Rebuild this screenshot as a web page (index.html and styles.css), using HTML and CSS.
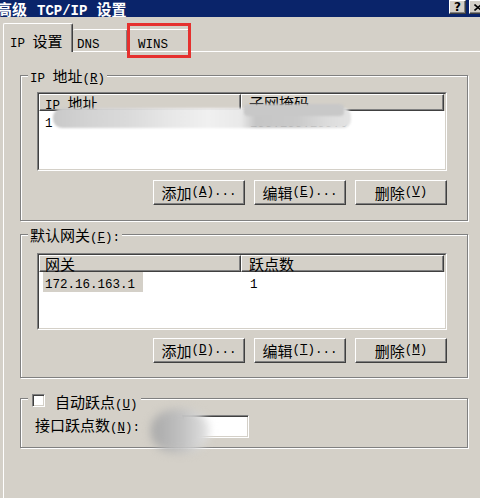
FILE: index.html
```html
<!DOCTYPE html>
<html lang="zh-CN">
<head>
<meta charset="utf-8">
<title>高级 TCP/IP 设置</title>
<link rel="stylesheet" href="styles.css">
</head>
<body>
<div class="titlebar">
  <span class="title">高级<span class="a tcp">TCP/IP</span>设置</span>
  <div class="tbtns">
    <span class="tbtn">?</span>
    <span class="tbtn"><svg width="8" height="7" viewBox="0 0 8 7"><path d="M0.5 0.5 L7.5 6.5 M7.5 0.5 L0.5 6.5" stroke="#000" stroke-width="1.6"/></svg></span>
  </div>
</div>
<div class="tabs">
  <div class="tab sel"><span class="a">IP </span>设置</div>
  <div class="tab dns"><span class="a">DNS</span></div>
  <div class="tab wins"><span class="a">WINS</span><span class="redbox"></span></div>
</div>
<div class="page">
  <div class="group g1">
    <div class="legend"><span class="a">IP </span>地址<span class="a">(<u>R</u>)</span></div>
    <div class="list l1">
      <div class="lin">
        <div class="lhead">
          <div class="hc c1"><span class="a">IP </span>地址</div>
          <div class="hc c2">子网掩码</div>
          <div class="hc c3"></div>
        </div>
        <div class="row">
          <div class="cell c1"><span class="a">1</span></div>
          <div class="cell c2"><span class="a">255.255.255.0</span></div>
        </div>
      </div>
      <div class="smear"></div>
      <div class="smear smear2"></div>
    </div>
    <div class="btns">
      <div class="btn">添加<span class="a">(<u>A</u>)...</span></div>
      <div class="btn">编辑<span class="a">(<u>E</u>)...</span></div>
      <div class="btn">删除<span class="a">(<u>V</u>)</span></div>
    </div>
  </div>

  <div class="group g2">
    <div class="legend">默认网关<span class="a">(<u>F</u>):</span></div>
    <div class="list l2">
      <div class="lin">
        <div class="lhead">
          <div class="hc c1">网关</div>
          <div class="hc c2">跃点数</div>
          <div class="hc c3"></div>
        </div>
        <div class="row">
          <div class="cell c1 selcell"><span class="hl"><span class="a">172.16.163.1</span></span></div>
          <div class="cell c2"><span class="a">1</span></div>
        </div>
      </div>
    </div>
    <div class="btns">
      <div class="btn">添加<span class="a">(<u>D</u>)...</span></div>
      <div class="btn">编辑<span class="a">(<u>T</u>)...</span></div>
      <div class="btn">删除<span class="a">(<u>M</u>)</span></div>
    </div>
  </div>

  <div class="group g3">
    <div class="legend chklegend">
      <span class="chk"></span>
      <span class="chklabel">自动跃点<span class="a">(<u>U</u>)</span></span>
    </div>
    <div class="hoprow">
      <span>接口跃点数<span class="a">(<u>N</u>):</span></span>
      <span class="textbox"></span>
    </div>
    <div class="blob"></div>
  </div>
</div>
</body>
</html>
```

FILE: styles.css
```css
* { box-sizing: border-box; }
html, body { margin: 0; padding: 0; }
body {
  width: 480px;
  height: 498px;
  overflow: hidden;
  background: #d4d0c8;
  font-family: "Noto Sans CJK SC", sans-serif;
  font-size: 15px;
  line-height: 17px;
  color: #000;
}
.a { font-family: "Liberation Mono", monospace; font-size: 12.5px; }
u { text-decoration: underline; text-underline-offset: 1px; }

/* title bar */
.titlebar {
  height: 17px;
  background: #0a246a;
  display: flex;
  justify-content: space-between;
  align-items: flex-start;
}
.title {
  color: #fff;
  font-weight: bold;
  font-size: 15px;
  margin-left: -3px;
  line-height: 17px;
  white-space: pre;
  flex: none;
}
.title .tcp { font-size: 14px; margin: 0 9px 0 10px; }
.tbtns { display: flex; gap: 3px; margin-right: -6px; }
.tbtn {
  width: 17px;
  height: 14px;
  background: #d4d0c8;
  border: 1px solid;
  border-color: #fff #404040 #404040 #fff;
  box-shadow: inset -1px -1px #808080;
  font: bold 12px "DejaVu Sans", sans-serif;
  display: flex;
  align-items: center;
  justify-content: center;
}

/* tabs */
.tabs {
  height: 34px;
  display: flex;
  align-items: flex-end;
  padding-left: 3px;
}
.tab {
  height: 22px;
  border-top: 1px solid #fff;
  border-right: 1px solid #404040;
  box-shadow: inset -1px 0 #808080;
  border-radius: 2px 2px 0 0;
  padding-top: 3px;
  line-height: 17px;
  position: relative;
}
.tab.sel {
  width: 70px;
  height: 29px;
  margin-bottom: -1px;
  border-left: 1px solid #fff;
  background: #d4d0c8;
  padding-top: 8px;
  padding-left: 6px;
  z-index: 1;
}
.tab.dns { width: 55px; padding-left: 4px; }
.tab.wins { width: 62px; padding-left: 10px; }
.redbox {
  position: absolute;
  left: -1px;
  top: -7px;
  width: 64px;
  height: 35px;
  border: 3px solid #e5302e;
}

/* page */
.page {
  margin-left: 3px;
  height: 460px;
  border-top: 1px solid #fff;
  border-left: 1px solid #fff;
  padding-top: 23px;
}

.group {
  width: 448px;
  margin-left: 16px;
  border: 1px solid #808080;
  box-shadow: 1px 1px 0 #fff, inset 1px 1px 0 #fff;
  display: flex;
  flex-direction: column;
  align-items: flex-start;
  position: relative;
}
.g1 { padding-bottom: 15px; }
.g2 { margin-top: 13px; padding-bottom: 14px; }
.g3 { margin-top: 20px; padding-bottom: 9px; }

.legend {
  margin: -9px 0 0 7px;
  padding: 0 2px;
  height: 17px;
  line-height: 17px;
  background: #d4d0c8;
  white-space: pre;
}

.list {
  margin-left: 16px;
  width: 410px;
  background: #fff;
  border: 1px solid;
  border-color: #808080 #fff #fff #808080;
  position: relative;
}
.l1 { margin-top: 8px; height: 79px; }
.l2 { margin-top: 10px; height: 77px; }
.lin {
  height: 100%;
  border: 1px solid;
  border-color: #404040 #d4d0c8 #d4d0c8 #404040;
}
.lhead { display: flex; height: 17px; }
.hc {
  height: 17px;
  background: #d4d0c8;
  border: 1px solid;
  border-color: #fff #404040 #404040 #fff;
  box-shadow: inset -1px -1px #808080;
  line-height: 15px;
  white-space: pre;
}
.hc.c1 { width: 202px; padding-left: 5px; }
.hc.c2 { width: 203px; padding-left: 7px; }
.hc.c3 { flex: 1; border: none; box-shadow: none; }
.row { display: flex; height: 20px; line-height: 20px; }
.cell.c1 { width: 202px; padding-left: 6px; }
.cell.c2 { padding-left: 9px; }
.cell.selcell { padding-left: 4px; }
.hl { display: inline-block; background: #d4d0c8; padding: 0 8px 0 2px; height: 20px; }

.smear {
  position: absolute;
  left: 15px;
  top: 15px;
  width: 298px;
  height: 20px;
  border-radius: 9px 8px 8px 9px;
  background: linear-gradient(90deg, #c9c9c9 0%, #d3d3d3 12%, #dadada 25%, #e6e6e6 38%, #f0f0f0 52%, #e9e9e9 63%, #c6c6c6 68%, #cacaca 82%, #dcdcdc 92%, #e4e4e4 100%);
  filter: blur(1.2px);
}
.smear2 {
  left: 206px;
  top: 11px;
  width: 100px;
  height: 12px;
  border-radius: 4px;
  background: #c8c8c8;
}

.btns {
  align-self: flex-end;
  margin-right: 20px;
  display: flex;
  gap: 9px;
}
.g1 .btns { margin-top: 9px; }
.g2 .btns { margin-top: 8px; }
.btn {
  width: 92px;
  height: 25px;
  border: 1px solid;
  border-color: #fff #404040 #404040 #fff;
  box-shadow: inset -1px -1px #808080;
  display: flex;
  align-items: center;
  justify-content: center;
  white-space: pre;
}

.chklegend {
  display: flex;
  align-items: flex-start;
  padding: 0 3px 0 4px;
}
.chk {
  width: 13px;
  height: 13px;
  margin-top: 4px;
  background: #fff;
  border: 1px solid;
  border-color: #808080 #fff #fff #808080;
  box-shadow: inset 1px 1px #404040, inset -1px -1px #d4d0c8;
}
.chklabel { margin: 3px 0 0 10px; }

.hoprow {
  display: flex;
  align-items: center;
  margin: 8px 0 0 14px;
  white-space: pre;
}
.textbox {
  width: 67px;
  height: 23px;
  margin-left: 42px;
  background: #fff;
  border: 1px solid;
  border-color: #808080 #fff #fff #808080;
  box-shadow: inset 1px 1px #404040, inset -1px -1px #d4d0c8;
}
.blob {
  position: absolute;
  left: 130px;
  top: 10px;
  width: 58px;
  height: 44px;
  border-radius: 45%;
  background: linear-gradient(90deg, #a8a8a8, #c2c2c2 55%, #e2e2e2);
  filter: blur(4px);
}
```
